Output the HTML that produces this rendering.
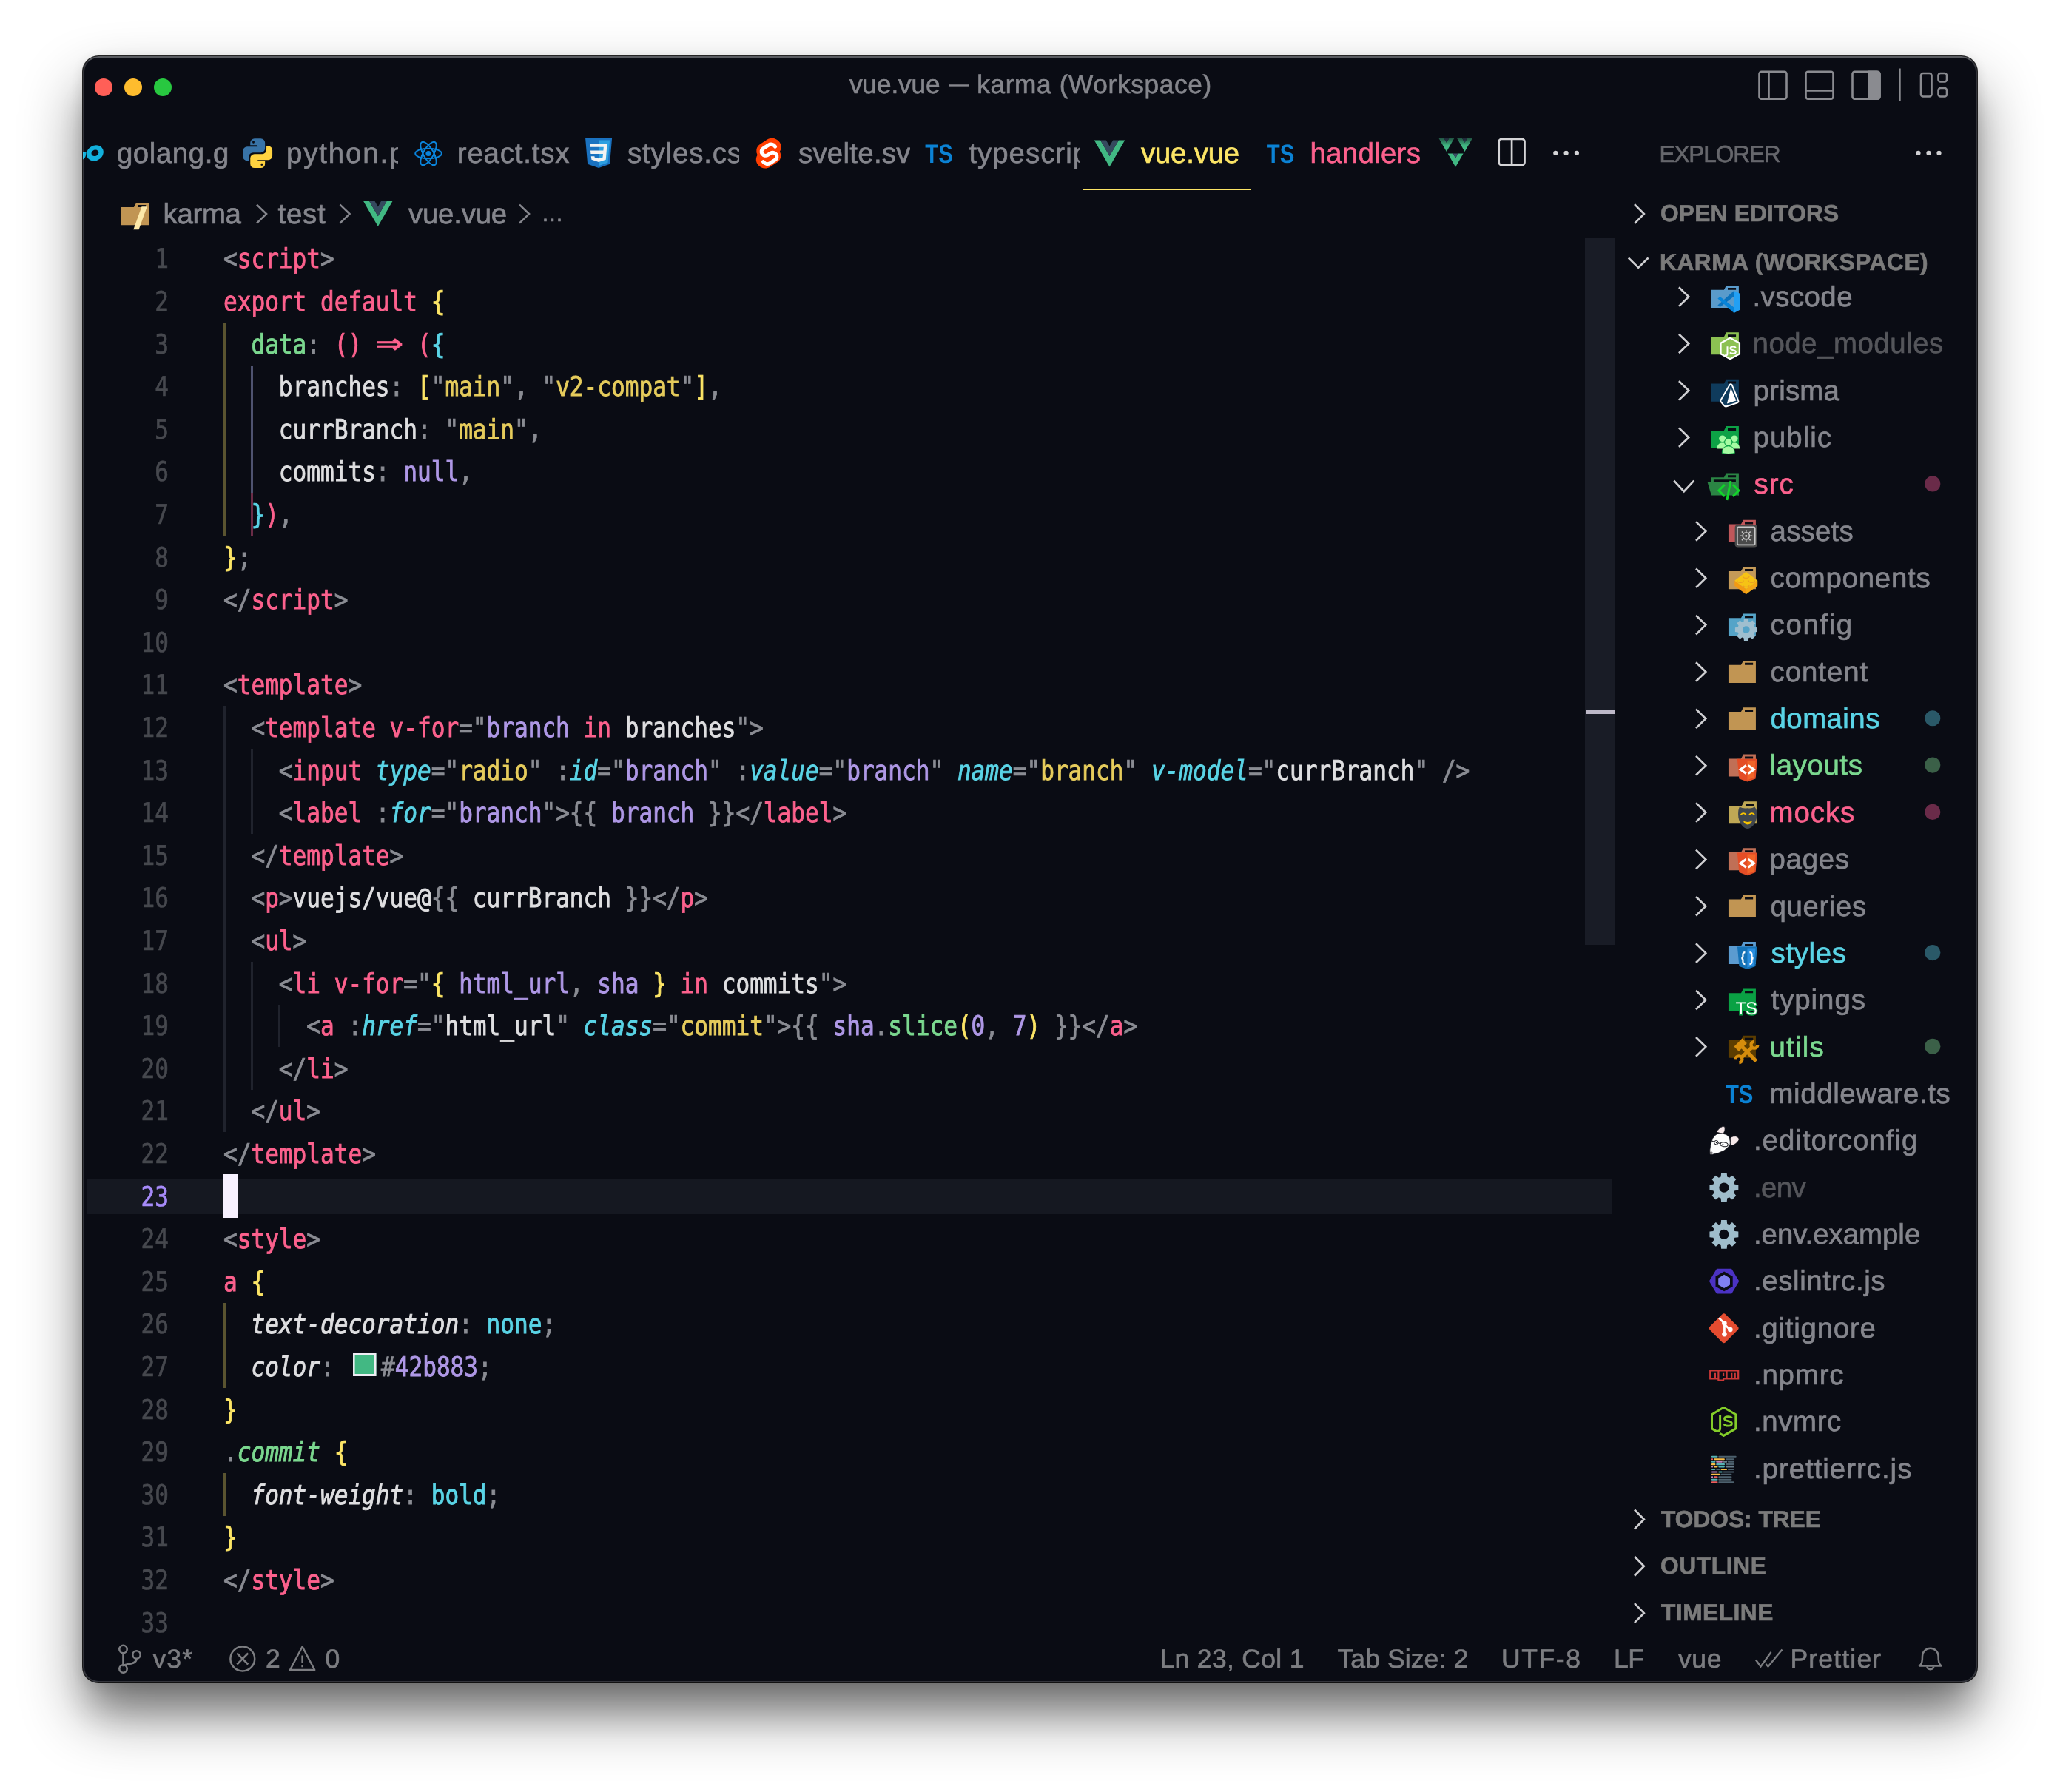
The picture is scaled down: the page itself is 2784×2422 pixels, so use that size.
<!DOCTYPE html><html><head><meta charset="utf-8"><title>vue.vue — karma (Workspace)</title><style>
*{box-sizing:border-box}
html,body{margin:0;padding:0;background:#fff;}
body{width:2784px;height:2422px;position:relative;overflow:hidden;font-family:"Liberation Sans",sans-serif;text-rendering:geometricPrecision;}
#win{position:absolute;left:112px;top:76px;width:2560px;height:2198px;background:#0a0c14;border-radius:21px;
 box-shadow:0 0 0 1px rgba(0,0,0,.85),0 43px 82px rgba(0,0,0,.46),0 4px 20px rgba(0,0,0,.12),0 46px 48px -10px rgba(0,0,0,.22);overflow:hidden;will-change:transform;}
#win:after{content:"";position:absolute;inset:0;border-radius:21px;border:2px solid rgba(255,255,255,.17);border-top-color:rgba(255,255,255,.33);pointer-events:none;}
.a{position:absolute}
.t{position:absolute;white-space:pre;color:#85868d;-webkit-text-stroke:.65px}
.ui{font-size:38.4px;letter-spacing:.45px;line-height:63.36px;height:63.36px}
.mono{font-family:"DejaVu Sans Mono","Liberation Mono",monospace;}
.ln{position:absolute;left:0;width:116px;text-align:right;color:#46484e;font-size:36.6px;line-height:57.599999999999994px;height:57.599999999999994px;white-space:pre}
.ln span{-webkit-text-stroke:.7px;display:inline-block;transform:scaleX(.8497);transform-origin:100% 50%}
.cl{-webkit-text-stroke:.95px;position:absolute;left:190.20000000000002px;font-size:36.6px;line-height:57.599999999999994px;height:57.599999999999994px;white-space:pre;transform:scaleX(.8497);transform-origin:0 50%;color:#dfdfe1}
.p{color:#8a8c93}.k{color:#fc618d}.y{color:#fce566}.s{color:#e6cc5c}.g{color:#7bd88f}.c{color:#5ad4e6}.v{color:#af98e6}.w{color:#dfdfe1}
.i{font-style:italic}
.gd{position:absolute;width:3px}
.hdr{font-weight:bold;font-size:31.68px;letter-spacing:.5px;color:#7b7b7b;line-height:63.36px;height:63.36px}
.st{font-size:35.5px;letter-spacing:.6px;line-height:63.36px;height:63.36px;color:#7c7d81}
svg{position:absolute;overflow:visible}
</style></head><body><div id="win">
<div class="a" style="left:16px;top:29.7px;width:24px;height:24px;border-radius:50%;background:#ff5f57"></div>
<div class="a" style="left:56px;top:29.7px;width:24px;height:24px;border-radius:50%;background:#febc2e"></div>
<div class="a" style="left:96px;top:29.7px;width:24px;height:24px;border-radius:50%;background:#28c840"></div>
<div id="t_title1" class="t title" style="left:1036.0px;top:9.4px;font-size:35.2px;line-height:60px;color:#85868c;letter-spacing:-0.103px">vue.vue</div>
<div id="t_title2" class="t title" style="left:1171.0px;top:7.0px;font-size:26px;line-height:60px;color:#85868c;letter-spacing:0.2px">—</div>
<div id="t_title3" class="t title" style="left:1208.2px;top:9.4px;font-size:35.2px;line-height:60px;color:#85868c;letter-spacing:0.663px">karma (Workspace)</div>
<svg style="left:2258px;top:14px" width="270" height="50" viewBox="2370 90 270 50" fill="none" stroke="#8a8b90" stroke-width="2.6">
<rect x="2377.5" y="96.8" width="37" height="37" rx="3"/><path d="M2390.5 96.8v37"/>
<rect x="2440.5" y="96.8" width="37" height="37" rx="3"/><path d="M2440.5 122.5h37"/>
<rect x="2503.5" y="96.8" width="37" height="37" rx="3"/><path d="M2526.300 96.8h10.200a4 4 0 0 1 4 4v29a4 4 0 0 1-4 4H2526.300z" fill="#8a8b90"/>
<path d="M2567.5 92.5v44.5" stroke-width="2.4"/>
<rect x="2596" y="99" width="14.5" height="31.5" rx="3"/><rect x="2619.5" y="99" width="11.5" height="11.5" rx="3"/><rect x="2619.5" y="119" width="11.5" height="11.5" rx="3"/>
</svg>
<div class="a" style="left:43.5px;top:82.04px;height:100px;width:152.5px;overflow:hidden">
<div id="t_tab0" class="t ui" style="left:2.41px;top:0.0px;line-height:100px;height:100px;letter-spacing:0.585px">golang.go</div>
</div>
<div class="a" style="left:272.7px;top:82.04px;height:100px;width:153.7px;overflow:hidden">
<div id="t_tab1" class="t ui" style="left:2.4px;top:0.0px;line-height:100px;height:100px;letter-spacing:1.85px">python.py</div>
</div>
<div class="a" style="left:503.8px;top:82.04px;height:100px;width:174.2px;overflow:hidden">
<div id="t_tab2" class="t ui" style="left:2.0px;top:0.0px;line-height:100px;height:100px;letter-spacing:0.825px">react.tsx</div>
</div>
<div class="a" style="left:733.5px;top:82.04px;height:100px;width:153.7px;overflow:hidden">
<div id="t_tab3" class="t ui" style="left:2.41px;top:0.0px;line-height:100px;height:100px;letter-spacing:0.862px">styles.css</div>
</div>
<div class="a" style="left:964.5px;top:82.04px;height:100px;width:153.1px;overflow:hidden">
<div id="t_tab4" class="t ui" style="left:2.41px;top:0.0px;line-height:100px;height:100px;letter-spacing:0.281px">svelte.svelte</div>
</div>
<div class="a" style="left:1195px;top:82.04px;height:100px;width:153px;overflow:hidden">
<div id="t_tab5" class="t ui" style="left:2.4px;top:0.0px;line-height:100px;height:100px;letter-spacing:1.0px">typescript.ts</div>
</div>
<div id="t_tabvue" class="t ui" style="left:1430.0px;top:82.04px;line-height:100px;height:100px;color:#fce566;letter-spacing:-0.22px">vue.vue</div>
<div id="t_tabhandlers" class="t ui" style="left:1658.5px;top:82.04px;line-height:100px;height:100px;color:#fc618d;letter-spacing:0.3px">handlers</div>
<div class="a" style="left:1351px;top:179px;width:227px;height:2px;background:#fce566"></div>
<div id="t_bc1" class="t ui" style="left:108.5px;top:181.74px;;letter-spacing:-0.3px">karma</div>
<div id="t_bc2" class="t ui" style="left:263.5px;top:181.74px;;letter-spacing:0.789px">test</div>
<div id="t_bc3" class="t ui" style="left:440.0px;top:181.74px;;letter-spacing:-0.224px">vue.vue</div>
<div class="t ui" style="left:619.5px;top:181.74px;font-size:30px;letter-spacing:-1.2px">…</div>
<div class="a" style="left:5px;top:1517.0px;width:2060.5px;height:47.99999999999999px;background:#151821"></div>
<div class="a" style="left:2030.2px;top:244.8px;width:40.20000000000027px;height:956.2px;background:#191c26"></div>
<div class="a" style="left:2031.2px;top:883.7px;width:39.20000000000027px;height:5.4px;background:#bdb8c8"></div>
<div class="a mono" style="left:0;top:244.8px;width:2070.4px;height:1889.84px;overflow:hidden">
<div class="ln" style="top:0.6px"><span>1</span></div>
<div class="cl" style="top:0.6px"><span class="p">&lt;</span><span class="k">script</span><span class="p">&gt;</span></div>
<div class="ln" style="top:58.2px"><span>2</span></div>
<div class="cl" style="top:58.2px"><span class="k">export default </span><span class="y">{</span></div>
<div class="ln" style="top:115.8px"><span>3</span></div>
<div class="cl" style="top:115.8px">  <span class="g">data</span><span class="p">: </span><span class="k">() </span><span class="k" style="display:inline-block;width:2ch;text-align:center"><span style="display:inline-block;transform:translateY(-3px) scale(1.95,1.25)">⇒</span></span><span class="k"> (</span><span class="c">{</span></div>
<div class="ln" style="top:173.4px"><span>4</span></div>
<div class="cl" style="top:173.4px">    <span class="w">branches</span><span class="p">: </span><span class="y">[</span><span class="p">"</span><span class="s">main</span><span class="p">"</span><span class="p">, </span><span class="p">"</span><span class="s">v2-compat</span><span class="p">"</span><span class="y">]</span><span class="p">,</span></div>
<div class="ln" style="top:231.0px"><span>5</span></div>
<div class="cl" style="top:231.0px">    <span class="w">currBranch</span><span class="p">: </span><span class="p">"</span><span class="s">main</span><span class="p">"</span><span class="p">,</span></div>
<div class="ln" style="top:288.6px"><span>6</span></div>
<div class="cl" style="top:288.6px">    <span class="w">commits</span><span class="p">: </span><span class="v">null</span><span class="p">,</span></div>
<div class="ln" style="top:346.2px"><span>7</span></div>
<div class="cl" style="top:346.2px">  <span class="c">}</span><span class="k">)</span><span class="p">,</span></div>
<div class="ln" style="top:403.8px"><span>8</span></div>
<div class="cl" style="top:403.8px"><span class="y">}</span><span class="p">;</span></div>
<div class="ln" style="top:461.4px"><span>9</span></div>
<div class="cl" style="top:461.4px"><span class="p">&lt;/</span><span class="k">script</span><span class="p">&gt;</span></div>
<div class="ln" style="top:519.0px"><span>10</span></div>
<div class="ln" style="top:576.6px"><span>11</span></div>
<div class="cl" style="top:576.6px"><span class="p">&lt;</span><span class="k">template</span><span class="p">&gt;</span></div>
<div class="ln" style="top:634.2px"><span>12</span></div>
<div class="cl" style="top:634.2px">  <span class="p">&lt;</span><span class="k">template v-for</span><span class="p">=</span><span class="p">"</span><span class="v">branch</span><span class="k"> in </span><span class="w">branches</span><span class="p">"</span><span class="p">&gt;</span></div>
<div class="ln" style="top:691.8px"><span>13</span></div>
<div class="cl" style="top:691.8px">    <span class="p">&lt;</span><span class="k">input </span><span class="c i">type</span><span class="p">=</span><span class="p">"</span><span class="s">radio</span><span class="p">"</span><span class="p"> :</span><span class="c i">id</span><span class="p">=</span><span class="p">"</span><span class="v">branch</span><span class="p">"</span><span class="p"> :</span><span class="c i">value</span><span class="p">=</span><span class="p">"</span><span class="v">branch</span><span class="p">"</span> <span class="c i">name</span><span class="p">=</span><span class="p">"</span><span class="s">branch</span><span class="p">"</span> <span class="c i">v-model</span><span class="p">=</span><span class="p">"</span><span class="w">currBranch</span><span class="p">"</span><span class="p"> /&gt;</span></div>
<div class="ln" style="top:749.4px"><span>14</span></div>
<div class="cl" style="top:749.4px">    <span class="p">&lt;</span><span class="k">label </span><span class="p">:</span><span class="c i">for</span><span class="p">=</span><span class="p">"</span><span class="v">branch</span><span class="p">"</span><span class="p">&gt;{{ </span><span class="v">branch</span><span class="p"> }}&lt;/</span><span class="k">label</span><span class="p">&gt;</span></div>
<div class="ln" style="top:807.0px"><span>15</span></div>
<div class="cl" style="top:807.0px">  <span class="p">&lt;/</span><span class="k">template</span><span class="p">&gt;</span></div>
<div class="ln" style="top:864.6px"><span>16</span></div>
<div class="cl" style="top:864.6px">  <span class="p">&lt;</span><span class="k">p</span><span class="p">&gt;</span><span class="w">vuejs/vue@</span><span class="p">{{ </span><span class="w">currBranch</span><span class="p"> }}&lt;/</span><span class="k">p</span><span class="p">&gt;</span></div>
<div class="ln" style="top:922.2px"><span>17</span></div>
<div class="cl" style="top:922.2px">  <span class="p">&lt;</span><span class="k">ul</span><span class="p">&gt;</span></div>
<div class="ln" style="top:979.8px"><span>18</span></div>
<div class="cl" style="top:979.8px">    <span class="p">&lt;</span><span class="k">li v-for</span><span class="p">=</span><span class="p">"</span><span class="y">{ </span><span class="v">html_url</span><span class="p">, </span><span class="v">sha</span><span class="y"> }</span><span class="k"> in </span><span class="w">commits</span><span class="p">"&gt;</span></div>
<div class="ln" style="top:1037.4px"><span>19</span></div>
<div class="cl" style="top:1037.4px">      <span class="p">&lt;</span><span class="k">a </span><span class="p">:</span><span class="c i">href</span><span class="p">=</span><span class="p">"</span><span class="w">html_url</span><span class="p">"</span> <span class="c i">class</span><span class="p">=</span><span class="p">"</span><span class="s">commit</span><span class="p">"</span><span class="p">&gt;{{ </span><span class="v">sha</span><span class="p">.</span><span class="g">slice</span><span class="y">(</span><span class="v">0</span><span class="p">, </span><span class="v">7</span><span class="y">)</span><span class="p"> }}&lt;/</span><span class="k">a</span><span class="p">&gt;</span></div>
<div class="ln" style="top:1095.0px"><span>20</span></div>
<div class="cl" style="top:1095.0px">    <span class="p">&lt;/</span><span class="k">li</span><span class="p">&gt;</span></div>
<div class="ln" style="top:1152.6px"><span>21</span></div>
<div class="cl" style="top:1152.6px">  <span class="p">&lt;/</span><span class="k">ul</span><span class="p">&gt;</span></div>
<div class="ln" style="top:1210.2px"><span>22</span></div>
<div class="cl" style="top:1210.2px"><span class="p">&lt;/</span><span class="k">template</span><span class="p">&gt;</span></div>
<div class="ln" style="top:1267.8px;color:#a78bfa"><span>23</span></div>
<div class="ln" style="top:1325.4px"><span>24</span></div>
<div class="cl" style="top:1325.4px"><span class="p">&lt;</span><span class="k">style</span><span class="p">&gt;</span></div>
<div class="ln" style="top:1383.0px"><span>25</span></div>
<div class="cl" style="top:1383.0px"><span class="k">a </span><span class="y">{</span></div>
<div class="ln" style="top:1440.6px"><span>26</span></div>
<div class="cl" style="top:1440.6px">  <span class="w i">text-decoration</span><span class="p">: </span><span class="c">none</span><span class="p">;</span></div>
<div class="ln" style="top:1498.2px"><span>27</span></div>
<div class="cl" style="top:1498.2px">  <span class="w i">color</span><span class="p">: </span><span style="display:inline-block;width:52.5px;height:57.6px;position:relative;vertical-align:top"><span style="position:absolute;left:7.3px;top:9.8px;width:37px;height:31.4px;background:#42b883;border:solid #efedf4;border-width:3.2px 3.8px"></span></span><span class="p">#</span><span class="v">42b883</span><span class="p">;</span></div>
<div class="ln" style="top:1555.8px"><span>28</span></div>
<div class="cl" style="top:1555.8px"><span class="y">}</span></div>
<div class="ln" style="top:1613.4px"><span>29</span></div>
<div class="cl" style="top:1613.4px"><span class="p">.</span><span class="g i">commit</span><span class="y"> {</span></div>
<div class="ln" style="top:1671.0px"><span>30</span></div>
<div class="cl" style="top:1671.0px">  <span class="w i">font-weight</span><span class="p">: </span><span class="c">bold</span><span class="p">;</span></div>
<div class="ln" style="top:1728.6px"><span>31</span></div>
<div class="cl" style="top:1728.6px"><span class="y">}</span></div>
<div class="ln" style="top:1786.2px"><span>32</span></div>
<div class="cl" style="top:1786.2px"><span class="p">&lt;/</span><span class="k">style</span><span class="p">&gt;</span></div>
<div class="ln" style="top:1843.8px"><span>33</span></div>
<div class="gd" style="left:189.6px;top:115.2px;height:288.0px;background:#5a5430"></div>
<div class="gd" style="left:227.04px;top:172.8px;height:172.8px;background:#4f5370"></div>
<div class="gd" style="left:227.04px;top:345.6px;height:57.6px;background:#6a2c47"></div>
<div class="gd" style="left:189.6px;top:633.6px;height:576.0px;background:#20232d"></div>
<div class="gd" style="left:227.04px;top:691.2px;height:115.2px;background:#20232d"></div>
<div class="gd" style="left:227.04px;top:979.2px;height:172.8px;background:#20232d"></div>
<div class="gd" style="left:264.48px;top:1036.8px;height:57.6px;background:#20232d"></div>
<div class="gd" style="left:189.6px;top:1440.0px;height:115.2px;background:#5a5430"></div>
<div class="gd" style="left:189.6px;top:1670.4px;height:57.6px;background:#5a5430"></div>
<div class="a" style="left:190px;top:1266.4px;width:19.2px;height:58.4px;background:#f7f1ff"></div>
</div>
<div id="t_s1" class="t st" style="left:94.5px;top:2134.64px;;letter-spacing:1.1px">v3*</div>
<div id="t_s2" class="t st" style="left:247.0px;top:2134.64px;;letter-spacing:0.6px">2</div>
<div id="t_s3" class="t st" style="left:327.5px;top:2134.64px;;letter-spacing:0.6px">0</div>
<div id="t_s4" class="t st" style="left:1455.5px;top:2134.64px;;letter-spacing:0.324px">Ln 23, Col 1</div>
<div id="t_s5" class="t st" style="left:1695.5px;top:2134.64px;;letter-spacing:0.1px">Tab Size: 2</div>
<div id="t_s6" class="t st" style="left:1917.0px;top:2134.64px;;letter-spacing:1.6px">UTF-8</div>
<div id="t_s7" class="t st" style="left:2069.0px;top:2134.64px;;letter-spacing:-0.4px">LF</div>
<div id="t_s8" class="t st" style="left:2156.0px;top:2134.64px;;letter-spacing:0.6px">vue</div>
<div id="t_s9" class="t st" style="left:2307.5px;top:2134.64px;;letter-spacing:1.177px">Prettier</div>
<div id="t_explorer" class="t " style="left:2130.5px;top:100.96px;font-size:31.6px;color:#66676c;line-height:63.36px;letter-spacing:-1.143px">EXPLORER</div>
<div id="t_h_OPEN" class="t hdr" style="left:2132.0px;top:181.24px;;letter-spacing:0.224px">OPEN EDITORS</div>
<div id="t_h_KARMA" class="t hdr" style="left:2131.0px;top:246.9px;;letter-spacing:0.561px">KARMA (WORKSPACE)</div>
<div id="t_h_TODOS" class="t hdr" style="left:2133.0px;top:1945.76px;;letter-spacing:0.0px">TODOS: TREE</div>
<div id="t_h_OUTLINE" class="t hdr" style="left:2132.0px;top:2009.12px;;letter-spacing:0.666px">OUTLINE</div>
<div id="t_h_TIMELINE" class="t hdr" style="left:2133.0px;top:2072.48px;;letter-spacing:0.506px">TIMELINE</div>
<div id="t_r0" class="t ui" style="left:2256.5px;top:293.82px;color:#85868d;letter-spacing:0.447px">.vscode</div>
<div id="t_r1" class="t ui" style="left:2256.5px;top:357.18px;color:#55565b;letter-spacing:0.54px">node_modules</div>
<div id="t_r2" class="t ui" style="left:2257.5px;top:420.54px;color:#85868d;letter-spacing:0.25px">prisma</div>
<div id="t_r3" class="t ui" style="left:2257.5px;top:483.9px;color:#85868d;letter-spacing:1.05px">public</div>
<div id="t_r4" class="t ui" style="left:2258.5px;top:547.26px;color:#fc618d;letter-spacing:0.95px">src</div>
<div id="t_r5" class="t ui" style="left:2280.54px;top:610.62px;color:#85868d;letter-spacing:0.25px">assets</div>
<div id="t_r6" class="t ui" style="left:2280.54px;top:673.98px;color:#85868d;letter-spacing:0.775px">components</div>
<div id="t_r7" class="t ui" style="left:2280.54px;top:737.34px;color:#85868d;letter-spacing:1.65px">config</div>
<div id="t_r8" class="t ui" style="left:2280.54px;top:800.7px;color:#85868d;letter-spacing:0.947px">content</div>
<div id="t_r9" class="t ui" style="left:2280.54px;top:864.06px;color:#5ad4e6;letter-spacing:0.448px">domains</div>
<div id="t_r10" class="t ui" style="left:2279.54px;top:927.42px;color:#7bd88f;letter-spacing:0.613px">layouts</div>
<div id="t_r11" class="t ui" style="left:2279.54px;top:990.78px;color:#fc618d;letter-spacing:0.95px">mocks</div>
<div id="t_r12" class="t ui" style="left:2279.54px;top:1054.14px;color:#85868d;letter-spacing:0.7px">pages</div>
<div id="t_r13" class="t ui" style="left:2280.54px;top:1117.5px;color:#85868d;letter-spacing:0.611px">queries</div>
<div id="t_r14" class="t ui" style="left:2281.54px;top:1180.86px;color:#5ad4e6;letter-spacing:0.65px">styles</div>
<div id="t_r15" class="t ui" style="left:2281.54px;top:1244.22px;color:#85868d;letter-spacing:0.953px">typings</div>
<div id="t_r16" class="t ui" style="left:2279.54px;top:1307.58px;color:#7bd88f;letter-spacing:1.2px">utils</div>
<div id="t_r17" class="t ui" style="left:2279.54px;top:1370.94px;color:#85868d;letter-spacing:0.609px">middleware.ts</div>
<div id="t_r18" class="t ui" style="left:2257.9px;top:1434.3px;color:#85868d;letter-spacing:1.032px">.editorconfig</div>
<div id="t_r19" class="t ui" style="left:2257.9px;top:1497.66px;color:#55565b;letter-spacing:-0.555px">.env</div>
<div id="t_r20" class="t ui" style="left:2257.9px;top:1561.02px;color:#85868d;letter-spacing:-0.013px">.env.example</div>
<div id="t_r21" class="t ui" style="left:2257.9px;top:1624.38px;color:#85868d;letter-spacing:0.637px">.eslintrc.js</div>
<div id="t_r22" class="t ui" style="left:2257.9px;top:1687.74px;color:#85868d;letter-spacing:0.786px">.gitignore</div>
<div id="t_r23" class="t ui" style="left:2257.9px;top:1751.1px;color:#85868d;letter-spacing:0.85px">.npmrc</div>
<div id="t_r24" class="t ui" style="left:2257.9px;top:1814.46px;color:#85868d;letter-spacing:0.65px">.nvmrc</div>
<div id="t_r25" class="t ui" style="left:2257.9px;top:1877.82px;color:#85868d;letter-spacing:0.994px">.prettierrc.js</div>
<svg style="left:0;top:0" width="2560" height="2198" viewBox="112 76 2560 2198"><g fill="none" stroke="#12b0dc"><ellipse cx="128.400" cy="206.800" rx="8.100" ry="7.400" stroke-width="6.400" transform="skewX(-8)" transform-origin="128.400 206.800"/><path d="M110.500 201.800A8.500 7.400 0 1 0 113.500 208.300H104" stroke-width="5.600"/></g><g transform="translate(324.32 183.32) scale(1.99)" ><path fill="#3873a7" d="M9.86 2A2.86 2.86 0 0 0 7 4.86v1.68h4.29c.39 0 .71.57.71.96H4.86A2.86 2.86 0 0 0 2 10.36v3.78a2.86 2.86 0 0 0 2.86 2.86h1.18v-2.68a2.85 2.85 0 0 1 2.85-2.86h5.25a2.85 2.85 0 0 0 2.86-2.85V4.86A2.86 2.86 0 0 0 14.14 2zm-.72 1.61c.4 0 .72.12.72.71s-.32.89-.72.89c-.39 0-.71-.3-.71-.89s.32-.71.71-.71z"/><path fill="#ffd340" d="M17.96 7v2.68a2.85 2.85 0 0 1-2.85 2.86H9.86A2.85 2.85 0 0 0 7 15.39v3.75A2.86 2.86 0 0 0 9.86 22h4.28A2.86 2.86 0 0 0 17 19.14v-1.68h-4.29c-.39 0-.71-.57-.71-.96h7.14A2.86 2.86 0 0 0 22 13.64V9.86A2.86 2.86 0 0 0 19.14 7zm-3.1 11.79c.39 0 .71.3.71.89a.71.71 0 0 1-.71.71c-.4 0-.72-.12-.72-.71s.32-.89.72-.89z"/></g><g transform="translate(558.5 187) scale(1.7083)" ><g fill="none" stroke="#0a84dc" stroke-width="1.15"><ellipse cx="12" cy="12" rx="10.4" ry="4"/><ellipse cx="12" cy="12" rx="10.4" ry="4" transform="rotate(60 12 12)"/><ellipse cx="12" cy="12" rx="10.4" ry="4" transform="rotate(120 12 12)"/></g><circle cx="12" cy="12" r="2.1" fill="#0a84dc"/></g><g transform="translate(791.1 186.7) scale(1)" ><path fill="#1a72c0" d="M0 0H36L33 35 18 40.400 3 35z"/><path fill="#2d9fe0" d="M18 2.800V37.500L30.400 33.100 33 2.800z"/><path fill="#f2f2f2" d="M6.500 7.300H29.500L27.700 29 18 32.200 8.300 29 7.700 24.500H12.300L12.600 26 18 27.600 23.400 26 23.900 21.400H7.300L6.900 16.800H24.300L24.700 12H6.900z"/></g><g transform="translate(1015 182.9) scale(1.995)" ><path fill="#ff3e00" d="M19.3 4.6C17.4 1.9 13.7 1.1 11 2.8L6.2 5.9a5.5 5.5 0 0 0-2.5 3.7 5.8 5.8 0 0 0 .6 3.7 5.5 5.5 0 0 0-.8 2 5.9 5.9 0 0 0 1 4.4c1.900 2.7 5.600 3.500 8.300 1.800l4.800-3.100a5.500 5.500 0 0 0 2.500-3.700 5.800 5.800 0 0 0-.6-3.700 5.500 5.500 0 0 0 .8-2 5.900 5.900 0 0 0-1-4.400"/><path fill="none" stroke="#fff" stroke-width="2.5" stroke-linecap="round" stroke-linejoin="round" d="M16.3 7.6c-1-1.500-3-1.900-4.500-1L8.300 8.900c-1.300.8-1.600 2.500-.7 3.700.9 1.200 2.500 1.500 3.800.700l1.800-1.100c1.300-.8 2.900-.5 3.800.700.9 1.200.6 2.900-.7 3.700L12.800 18.900c-1.500.9-3.500.5-4.500-1"/></g><text x="1250.3" y="220" font-family="Liberation Sans, sans-serif" font-weight="bold" font-size="35.5" fill="#0b82d4" textLength="37.5" lengthAdjust="spacingAndGlyphs">TS</text><g transform="translate(1478.8 189.5) scale(1.725)" ><path fill="#41b883" d="M0 0h4.800L12 12.400 19.200 0H24L12 20.800z"/><path fill="#35495e" d="M4.800 0h4.500L12 4.700 14.700 0h4.500L12 12.400z"/></g><text x="1711.8" y="220" font-family="Liberation Sans, sans-serif" font-weight="bold" font-size="35.5" fill="#0b82d4" textLength="37.5" lengthAdjust="spacingAndGlyphs">TS</text><defs><linearGradient id="fd" x1="0" y1="0" x2="0" y2="1"><stop offset="0" stop-color="#0a0c14" stop-opacity=".75"/><stop offset=".5" stop-color="#0a0c14" stop-opacity="0"/></linearGradient></defs><g transform="translate(1944.4 186.7) scale(0.875)" ><path fill="#41b883" d="M0 0h8L12 7 16 0h8L12 21z"/><path fill="#3a5068" d="M8 0h8l-4 7z"/></g><g transform="translate(1969 186.7) scale(0.875)" ><path fill="#41b883" d="M0 0h8L12 7 16 0h8L12 21z"/><path fill="#3a5068" d="M8 0h8l-4 7z"/></g><g transform="translate(1956.6 207.4) scale(0.875)" ><path fill="#41b883" d="M0 0h8L12 7 16 0h8L12 21z"/><path fill="#3a5068" d="M8 0h8l-4 7z"/></g><rect x="1940" y="184" width="54" height="26" fill="url(#fd)"/><g fill="none" stroke="#d4d4d6" stroke-width="2.7"><rect x="2025.7" y="188" width="34.8" height="35" rx="3.5"/><path d="M2043.1 188v35"/></g><circle cx="2102.3" cy="206.9" r="3.1" fill="#d4d4d6"/><circle cx="2116.6" cy="206.9" r="3.1" fill="#d4d4d6"/><circle cx="2130.9" cy="206.9" r="3.1" fill="#d4d4d6"/><path transform="translate(164 274.2)" fill="#c19553" fill-rule="evenodd" d="M0 5.8H17L20.1 0H37V30H0Z M22.1 2.9H33.2V5.8H22.1Z"/><path d="M191.500 279.300h7.300l-11.200 31h-7.300z" fill="#fde9a9"/><path d="M347 276.62l13 12.5l-13 12.5" fill="none" stroke="#85868d" stroke-width="2.6"/><path d="M459.5 276.62l13 12.5l-13 12.5" fill="none" stroke="#85868d" stroke-width="2.6"/><g transform="translate(490.9 271.6) scale(1.6583)" ><path fill="#41b883" d="M0 0h4.800L12 12.400 19.200 0H24L12 20.800z"/><path fill="#35495e" d="M4.800 0h4.500L12 4.700 14.700 0h4.500L12 12.400z"/></g><path d="M702 276.62l13 12.5l-13 12.5" fill="none" stroke="#85868d" stroke-width="2.6"/><g fill="none" stroke="#7c7d81" stroke-width="2.6"><circle cx="166.5" cy="2229" r="5.2"/><circle cx="166.5" cy="2255.5" r="5.2"/><circle cx="184.5" cy="2236.500" r="5.2"/><path d="M166.5 2234.2v16.1M184.5 2241.700c0 6-7 7-12 7.600-3 .4-6 1-6 3"/></g><g fill="none" stroke="#7c7d81" stroke-width="2.5"><circle cx="327.8" cy="2242" r="16.4"/><path d="M320.300 2234.500l15 15M335.300 2234.500l-15 15"/></g><g fill="none" stroke="#7c7d81" stroke-width="2.5" stroke-linejoin="round"><path d="M408.600 2225.500l16.600 31.500h-33.200z"/><path d="M408.600 2237.500v9.500M408.600 2250v3.200"/></g><path d="M2373 2243.500l6.500 9 14-19.500M2386.500 2249l3 3.500 19-23" fill="none" stroke="#7c7d81" stroke-width="2.4"/><g fill="none" stroke="#7c7d81" stroke-width="2.5" stroke-linejoin="round"><path d="M2594 2251.500c3.500-3 4-6 4-13a10.800 10.800 0 0 1 21.600 0c0 7 .5 10 4 13z"/><path d="M2604.300 2252.500a4.600 4.600 0 0 0 9 0"/></g><circle cx="2592.5" cy="206.9" r="3.1" fill="#cfcfd2"/><circle cx="2606.5" cy="206.9" r="3.1" fill="#cfcfd2"/><circle cx="2620.5" cy="206.9" r="3.1" fill="#cfcfd2"/><path d="M2209 276.12l12.8 13.0l-12.8 13.0" fill="none" stroke="#cfcfd2" stroke-width="2.7"/><path d="M2200.8 348.48l13.4 13.2l13.4 -13.2" fill="none" stroke="#cfcfd2" stroke-width="2.7"/><path d="M2209 2040.4399999999996l12.8 13.0l-12.8 13.0" fill="none" stroke="#cfcfd2" stroke-width="2.7"/><path d="M2209 2103.7999999999997l12.8 13.0l-12.8 13.0" fill="none" stroke="#cfcfd2" stroke-width="2.7"/><path d="M2209 2167.16l12.8 13.0l-12.8 13.0" fill="none" stroke="#cfcfd2" stroke-width="2.7"/><clipPath id="tc"><rect x="2182.4" y="384.6" width="489.59999999999997" height="1635.96"/></clipPath><g clip-path="url(#tc)"><path d="M2269.0 388.3l13.2 12.8l-13.2 12.8" fill="none" stroke="#cfcfd2" stroke-width="2.7"/><path transform="translate(2312.9 386.0)" fill="#5a9bcb" fill-rule="evenodd" d="M0 5.8H17L20.1 0H37V30H0Z M22.1 2.9H33.2V5.8H22.1Z"/><g transform="translate(2321.4 392.5)"><path d="M22 0.500L30.500 4.500V26L22 30.500z" fill="#22a0f4"/><path d="M22 0.500v7.500L3.200 22.500 0 20z" fill="#0a72bd"/><path d="M22 30.500v-7.500L3.200 8.500 0 11z" fill="#0784d9"/></g><path d="M2269.0 451.66l13.2 12.8l-13.2 12.8" fill="none" stroke="#cfcfd2" stroke-width="2.7"/><path transform="translate(2312.9 449.36)" fill="#8cc152" fill-rule="evenodd" d="M0 5.8H17L20.1 0H37V30H0Z M22.1 2.9H33.2V5.8H22.1Z"/><g transform="translate(2324.9 456.86)"><path d="M13.300 0L26 7v14.500L13.300 28.500.6 21.500V7z" fill="#8cc152" stroke="#fff" stroke-width="2.3" stroke-linejoin="round"/><path d="M9.600 11.500v10c0 2-1.600 3-3.600 1.500" fill="none" stroke="#fff" stroke-width="2"/><path d="M21 13c-1.500-2-7.500-2-7.500 1s7.500 1.600 7.500 4.600-6.500 3-8 .9" fill="none" stroke="#fff" stroke-width="2"/></g><path d="M2269.0 515.0200000000001l13.2 12.8l-13.2 12.8" fill="none" stroke="#cfcfd2" stroke-width="2.7"/><path transform="translate(2312.9 512.72)" fill="#0f3b5c" fill-rule="evenodd" d="M0 5.8H17L20.1 0H37V30H0Z M22.1 2.9H33.2V5.8H22.1Z"/><g transform="translate(2324.4 518.52) scale(1.26)"><path d="M10.500 1.200L1 17.500c-.5.9-.4 1.500.2 2.200l3.600 4.100c.7.700 1.400.9 2.300.6l11.700-3.900c1-.4 1.300-1.300.9-2.200L12.900 1.300c-.5-1-1.800-1.100-2.400-.1z" fill="#0f3b5c" stroke="#fff" stroke-width="1.500"/><path d="M11.700 4.500L17.500 18.300 7.600 21.500z" fill="#fff"/></g><path d="M2269.0 578.38l13.2 12.8l-13.2 12.8" fill="none" stroke="#cfcfd2" stroke-width="2.7"/><path transform="translate(2312.9 576.08)" fill="#0da246" fill-rule="evenodd" d="M0 5.8H17L20.1 0H37V30H0Z M22.1 2.9H33.2V5.8H22.1Z"/><g transform="translate(2320.5 586.0799999999999) scale(1.04 .95)" fill="#a5fba3"><circle cx="7" cy="7" r="4.500"/><circle cx="22.500" cy="7" r="4.500"/><path d="M0 21.500c0-6 3-8.500 7-8.500s5 1.500 6 3l-3.500 5.500z"/><path d="M29.500 21.500c0-6-3-8.500-7-8.500s-5 1.500-6 3l3.500 5.500z"/><circle cx="14.700" cy="12" r="5" stroke="#0da246" stroke-width="1"/><path d="M6.500 27.500c0-7 3.500-9.800 8.200-9.800s8.200 2.800 8.200 9.800c-3 1.700-13.400 1.700-16.400 0z" stroke="#0da246" stroke-width="1"/></g><path d="M2262.3 649.69l13.5 14.5l13.5 -14.5" fill="none" stroke="#cfcfd2" stroke-width="2.7"/><g transform="translate(2312.9 639.44)" fill="#2b8544"><path fill-rule="evenodd" d="M0 5.800H17L20.100 0H37V12h-4V8.700H3V12H0z M22.100 2.900H33.200V5.800H22.100Z"/><path d="M-5.200 12.500H33.500L37 30H0z"/><path d="M33 12h4v18h-1z"/></g><g transform="translate(2321.4 649.94)" fill="none" stroke="#12d42a" stroke-width="3"><path d="M9.500 5L1.500 13l8 8M20.500 5l8 8-8 8M17.500 0l-5 26"/></g><circle cx="2611.800" cy="653.94" r="10.600" fill="#6a2b49"/><path d="M2292.04 705.1l13.2 12.8l-13.2 12.8" fill="none" stroke="#cfcfd2" stroke-width="2.7"/><path transform="translate(2335.94 702.8)" fill="#c0575a" fill-rule="evenodd" d="M0 5.8H17L20.1 0H37V30H0Z M22.1 2.9H33.2V5.8H22.1Z"/><g transform="translate(2344.64 709.1999999999999)"><rect x="0" y="0" width="30.300" height="30.300" rx="4" fill="#4a4a4a"/><rect x="3.200" y="3.200" width="23.900" height="23.900" rx="1.800" fill="none" stroke="#c9c9c9" stroke-width="1.700"/><circle cx="15.150" cy="15.150" r="4.600" fill="none" stroke="#c9c9c9" stroke-width="1.700"/><circle cx="15.150" cy="15.150" r="1.600" fill="#c9c9c9"/><path d="M15.150 6.800v3.200M15.150 20.300v3.200M6.800 15.150h3.200M20.300 15.150h3.200M9.250 9.250l2.300 2.300M18.750 18.750l2.300 2.300M9.250 21.050l2.300-2.300M18.750 11.550l2.300-2.300" stroke="#c9c9c9" stroke-width="1.500"/></g><path d="M2292.04 768.46l13.2 12.8l-13.2 12.8" fill="none" stroke="#cfcfd2" stroke-width="2.7"/><path transform="translate(2335.94 766.16)" fill="#c49a58" fill-rule="evenodd" d="M0 5.8H17L20.1 0H37V30H0Z M22.1 2.9H33.2V5.8H22.1Z"/><g transform="translate(2344.2400000000002 772.86)"><path d="M0 12L15.500 23.500v6.800L0 18.800z" fill="#f39a13"/><path d="M31 12L15.500 23.500v6.800L31 18.800z" fill="#f5a915"/><path d="M15.500 0L31 12 15.500 23.500 0 12z" fill="#f6c315"/><g fill="#f6c315" stroke="#ea9f24" stroke-width="1.100"><path d="M11.200 5.600a4.300 2.900 0 0 0 8.600 0"/><path d="M3.400 11.600a4.300 2.900 0 0 0 8.600 0"/><path d="M19 11.600a4.300 2.900 0 0 0 8.600 0"/><path d="M11.200 17.600a4.300 2.900 0 0 0 8.600 0"/></g></g><path d="M2292.04 831.82l13.2 12.8l-13.2 12.8" fill="none" stroke="#cfcfd2" stroke-width="2.7"/><path transform="translate(2335.94 829.52)" fill="#55a4c8" fill-rule="evenodd" d="M0 5.8H17L20.1 0H37V30H0Z M22.1 2.9H33.2V5.8H22.1Z"/><g transform="translate(2359.84 851.12)"><circle r="8" fill="#55a4c8"/><path d="M-3.32 -11.22L-2.90 -14.92L2.90 -14.92L3.32 -11.22L5.58 -10.28L8.50 -12.60L12.60 -8.50L10.28 -5.58L11.22 -3.32L14.92 -2.90L14.92 2.90L11.22 3.32L10.28 5.58L12.60 8.50L8.50 12.60L5.58 10.28L3.32 11.22L2.90 14.92L-2.90 14.92L-3.32 11.22L-5.58 10.28L-8.50 12.60L-12.60 8.50L-10.28 5.58L-11.22 3.32L-14.92 2.90L-14.92 -2.90L-11.22 -3.32L-10.28 -5.58L-12.60 -8.50L-8.50 -12.60L-5.58 -10.28ZM4.9 0A4.9 4.9 0 1 0 -4.9 0A4.9 4.9 0 1 0 4.9 0Z" fill="#9fbfcf" fill-rule="evenodd"/></g><path d="M2292.04 895.1800000000001l13.2 12.8l-13.2 12.8" fill="none" stroke="#cfcfd2" stroke-width="2.7"/><path transform="translate(2335.94 892.88)" fill="#c19553" fill-rule="evenodd" d="M0 5.8H17L20.1 0H37V30H0Z M22.1 2.9H33.2V5.8H22.1Z"/><path d="M2292.04 958.5400000000001l13.2 12.8l-13.2 12.8" fill="none" stroke="#cfcfd2" stroke-width="2.7"/><path transform="translate(2335.94 956.24)" fill="#c19553" fill-rule="evenodd" d="M0 5.8H17L20.1 0H37V30H0Z M22.1 2.9H33.2V5.8H22.1Z"/><circle cx="2611.800" cy="970.74" r="10.600" fill="#2a5968"/><path d="M2292.04 1021.8999999999999l13.2 12.8l-13.2 12.8" fill="none" stroke="#cfcfd2" stroke-width="2.7"/><path transform="translate(2335.94 1019.6)" fill="#c06f56" fill-rule="evenodd" d="M0 5.8H17L20.1 0H37V30H0Z M22.1 2.9H33.2V5.8H22.1Z"/><g transform="translate(2347.84 1025.6999999999998)"><path d="M0 0h27.200l-2.500 26.700L13.600 30.800 2.500 26.700z" fill="#e44d26"/><path d="M13.600 2.200v26.300l9-3.400L24.800 2.200z" fill="#f16529"/><path d="M12 8.800L4.300 14.300 12 19.800M14.800 8.800L22.500 14.300 14.800 19.800" fill="none" stroke="#fff" stroke-width="3.200"/></g><circle cx="2611.800" cy="1034.1" r="10.600" fill="#3b6048"/><path d="M2292.04 1085.26l13.2 12.8l-13.2 12.8" fill="none" stroke="#cfcfd2" stroke-width="2.7"/><path transform="translate(2336.94 1083.16)" fill="#bfa855" fill-rule="evenodd" d="M0 5.8H17L20.1 0H37V30H0Z M22.1 2.9H33.2V5.8H22.1Z"/><g transform="translate(2349.04 1089.96)"><path d="M1.900 .5Q7 3.500 12.600 2.200 18 3.500 22.300 .5 25.500 4 25.500 10.400 25.500 20 20 26 16 30 12.600 30.100 9 30 5.500 26 0 20 0 10.400 0 4 1.900 .5z" fill="#3f464e"/><path d="M3.600 11.200Q7 7.200 10.600 11.200M15 11.200Q18.400 7.200 22 11.200" fill="none" stroke="#f8c400" stroke-width="1.900"/><path d="M6.800 19.400Q12.900 22.500 19 19.400 17.500 24.600 12.900 24.600 8.300 24.600 6.800 19.400z" fill="#f8c400"/></g><circle cx="2611.800" cy="1097.46" r="10.600" fill="#6a2b49"/><path d="M2292.04 1148.62l13.2 12.8l-13.2 12.8" fill="none" stroke="#cfcfd2" stroke-width="2.7"/><path transform="translate(2335.94 1146.32)" fill="#c06f56" fill-rule="evenodd" d="M0 5.8H17L20.1 0H37V30H0Z M22.1 2.9H33.2V5.8H22.1Z"/><g transform="translate(2347.84 1152.4199999999998)"><path d="M0 0h27.200l-2.500 26.700L13.600 30.800 2.500 26.700z" fill="#e44d26"/><path d="M13.600 2.200v26.300l9-3.400L24.800 2.200z" fill="#f16529"/><path d="M12 8.800L4.300 14.300 12 19.800M14.800 8.800L22.500 14.300 14.800 19.800" fill="none" stroke="#fff" stroke-width="3.200"/></g><path d="M2292.04 1211.9799999999998l13.2 12.8l-13.2 12.8" fill="none" stroke="#cfcfd2" stroke-width="2.7"/><path transform="translate(2335.94 1209.68)" fill="#c19553" fill-rule="evenodd" d="M0 5.8H17L20.1 0H37V30H0Z M22.1 2.9H33.2V5.8H22.1Z"/><path d="M2292.04 1275.34l13.2 12.8l-13.2 12.8" fill="none" stroke="#cfcfd2" stroke-width="2.7"/><path transform="translate(2335.94 1273.04)" fill="#5b9bd0" fill-rule="evenodd" d="M0 5.8H17L20.1 0H37V30H0Z M22.1 2.9H33.2V5.8H22.1Z"/><g transform="translate(2347.94 1279.54)"><path d="M0 0h27l-2.500 26.500L13.500 30.500 2.500 26.500z" fill="#1572b6"/><path d="M13.500 2v26.300l9-3.300L24.600 2z" fill="#2a8fe0"/><path d="M10.500 7.500c-2.500 0-3 1-3 3v2.500c0 1.500-.7 2.300-2 2.500 1.300.2 2 1 2 2.500v2.500c0 2 .5 3 3 3M16.500 7.500c2.500 0 3 1 3 3v2.500c0 1.500.7 2.300 2 2.500-1.300.2-2 1-2 2.500v2.500c0 2-.5 3-3 3" fill="none" stroke="#fff" stroke-width="2.200"/></g><circle cx="2611.800" cy="1287.54" r="10.600" fill="#2a5968"/><path d="M2292.04 1338.7l13.2 12.8l-13.2 12.8" fill="none" stroke="#cfcfd2" stroke-width="2.7"/><path transform="translate(2335.94 1336.4)" fill="#0aa144" fill-rule="evenodd" d="M0 5.8H17L20.1 0H37V30H0Z M22.1 2.9H33.2V5.8H22.1Z"/><text x="2345.44" y="1370.8000000000002" font-family="Liberation Sans, sans-serif" font-size="24" fill="#fff" stroke="#0aa144" stroke-width="3" paint-order="stroke" textLength="29.500" lengthAdjust="spacing">TS</text><path d="M2292.04 1402.06l13.2 12.8l-13.2 12.8" fill="none" stroke="#cfcfd2" stroke-width="2.7"/><path transform="translate(2335.94 1399.76)" fill="#5c3d00" fill-rule="evenodd" d="M0 5.8H17L20.1 0H37V30H0Z M22.1 2.9H33.2V5.8H22.1Z"/><g transform="translate(2335.94 1399.76)" fill="none" stroke="#d68d0c"><path d="M32.500 15L17 30" stroke-width="5"/><path d="M39.480 12.890A4.500 4.500 0 1 1 34.610 8.020" stroke-width="4.200"/><path d="M9.520 31.610A4.500 4.500 0 1 1 14.390 36.480" stroke-width="4.200"/><path d="M18 14.500L37.500 34.500" stroke-width="5"/><rect x="8.500" y="8" width="15.500" height="9" transform="rotate(-45 16.250 12.500)" fill="#d68d0c" stroke="none"/></g><circle cx="2611.800" cy="1414.26" r="10.600" fill="#3b6048"/><text x="2331.94" y="1491.12" font-family="Liberation Sans, sans-serif" font-weight="bold" font-size="35.500" fill="#0b82d4" textLength="37.5" lengthAdjust="spacingAndGlyphs">TS</text><g transform="translate(2310.4 1542.98)" stroke="#15161c" stroke-width=".7"><path d="M9.500 -12.900Q12 -18 16.800 -20.200 20 -21 20.700 -19.200 21 -15 19.700 -12.900L18.200 -10.500z" fill="#f7e9ea"/><path d="M27.900 -4.200Q29 -6.500 31.800 -7.100 35.500 -8 38.100 -6.100 40 -4.500 39.600 -2.200 38 1 34.700 3.100 32 5 28.500 5.200z" fill="#f7e9ea"/><path d="M11 -11Q17 -12 22.600 -9.500 26 -8 27 -4.200 28.500 1 27.500 4.600 24 9 19.600 12 12 16 4.200 17.200 1 17.800 .5 16.500 0 11 1.300 5.500 2.500 0 4.200 -4.200 7 -9 11 -11z" fill="#fdfdfd"/><g fill="none" stroke="#15161c" stroke-width="1"><circle cx="9" cy="1.200" r="2.700"/><ellipse cx="19.700" cy="3.800" rx="5.200" ry="2.900" transform="rotate(8 19.700 3.800)"/><path d="M11.700 1.800l3 1M3 -1l3.500 1.300M24.800 4.500l3 .3"/></g><circle cx="9.300" cy="1.300" r=".9" fill="#15161c" stroke="none"/><circle cx="18" cy="3.600" r=".9" fill="#15161c" stroke="none"/><ellipse cx="2.300" cy="15.200" rx="1.700" ry="1.200" fill="#e9e1e1" stroke-width=".6"/></g><g transform="translate(2329.9 1605.04)"><path d="M-4.29 -14.48L-3.78 -19.44L3.78 -19.44L4.29 -14.48L7.21 -13.27L11.07 -16.41L16.41 -11.07L13.27 -7.21L14.48 -4.29L19.44 -3.78L19.44 3.78L14.48 4.29L13.27 7.21L16.41 11.07L11.07 16.41L7.21 13.27L4.29 14.48L3.78 19.44L-3.78 19.44L-4.29 14.48L-7.21 13.27L-11.07 16.41L-16.41 11.07L-13.27 7.21L-14.48 4.29L-19.44 3.78L-19.44 -3.78L-14.48 -4.29L-13.27 -7.21L-16.41 -11.07L-11.07 -16.41L-7.21 -13.27ZM6.6 0A6.6 6.6 0 1 0 -6.6 0A6.6 6.6 0 1 0 6.6 0Z" fill="#9fbdcb" fill-rule="evenodd"/></g><g transform="translate(2329.9 1668.4)"><path d="M-4.29 -14.48L-3.78 -19.44L3.78 -19.44L4.29 -14.48L7.21 -13.27L11.07 -16.41L16.41 -11.07L13.27 -7.21L14.48 -4.29L19.44 -3.78L19.44 3.78L14.48 4.29L13.27 7.21L16.41 11.07L11.07 16.41L7.21 13.27L4.29 14.48L3.78 19.44L-3.78 19.44L-4.29 14.48L-7.21 13.27L-11.07 16.41L-16.41 11.07L-13.27 7.21L-14.48 4.29L-19.44 3.78L-19.44 -3.78L-14.48 -4.29L-13.27 -7.21L-16.41 -11.07L-11.07 -16.41L-7.21 -13.27ZM6.6 0A6.6 6.6 0 1 0 -6.6 0A6.6 6.6 0 1 0 6.6 0Z" fill="#9fbdcb" fill-rule="evenodd"/></g><g transform="translate(2330.1 1731.6599999999999)"><polygon points="18.20,0.00 9.10,15.76 -9.10,15.76 -18.20,0.00 -9.10,-15.76 9.10,-15.76" transform="scale(1 .96)" fill="#4b32c3" stroke="#4b32c3" stroke-width="3.500" stroke-linejoin="round"/><polygon points="11.60,7.00 0.00,13.70 -11.60,7.00 -11.60,-6.40 -0.00,-13.10 11.60,-6.40" fill="#0a0c14"/><polygon points="7.88,4.85 0.00,9.40 -7.88,4.85 -7.88,-4.25 -0.00,-8.80 7.88,-4.25" fill="#8080f2"/></g><g transform="translate(2308.4 1773.92) scale(1.13)"><rect x="5.600" y="5.600" width="26.500" height="26.500" rx="3" transform="rotate(45 18.850 18.850)" fill="#e44c30"/><path d="M13 6.500l6.500 6.500v13M19.500 14l6.500 6.500" stroke="#fff" stroke-width="2.400" fill="none"/><circle cx="19.500" cy="13" r="2.900" fill="#fff"/><circle cx="19.500" cy="26" r="2.900" fill="#fff"/><circle cx="26.500" cy="20.500" r="2.900" fill="#fff"/></g><path transform="translate(2310.1 1851.18) scale(2.233)" fill="#cb3837" fill-rule="evenodd" d="M0 0h18v6H9v1H5V6H0V0zm1 5h2V2h1v3h1V1H1v4zm5-4v5h2V5h2V1H6zm2 1h1v2H8V2zm3-1v4h2V2h1v3h1V2h1v3h1V1h-6z"/><g transform="translate(2311.9 1900.6399999999999) scale(1.06)" fill="none" stroke="#83cd29" stroke-width="2.800"><path d="M16.500 1.500L32 10.500v18L16.500 37.500 11.500 34.500M16.500 1.500L1.500 10.500v18l4.500 2.600c3 1.500 6 .5 6-3V11.500" stroke-linejoin="round"/><path d="M27 15c-1.500-2.500-9.500-2.800-9.500 1s9.500 2 9.500 6-8.500 3.800-10 .8" stroke-width="2.600"/></g><g transform="translate(2312.9 1967.7)"><rect x="0" y="0.0" width="8.6" height="2.100" rx="1" fill="#56b3b4"/><rect x="9.4" y="0.0" width="24.4" height="2.100" rx="1" fill="#4d616e"/><rect x="0" y="3.45" width="2.3" height="2.100" rx="1" fill="#ea5e5e"/><rect x="3.1" y="3.45" width="14.9" height="2.100" rx="1" fill="#fbbf47"/><rect x="18.9" y="3.45" width="11.8" height="2.100" rx="1" fill="#4d616e"/><rect x="0" y="6.9" width="5.5" height="2.100" rx="1" fill="#56b3b4"/><rect x="6.3" y="6.9" width="8.6" height="2.100" rx="1" fill="#bf85bf"/><rect x="15.8" y="6.9" width="5.5" height="2.100" rx="1" fill="#6a7f8c"/><rect x="22.1" y="6.9" width="8.6" height="2.100" rx="1" fill="#4d616e"/><rect x="0" y="10.35" width="5.5" height="2.100" rx="1" fill="#fbbf47"/><rect x="6.3" y="10.35" width="11.8" height="2.100" rx="1" fill="#56b3b4"/><rect x="18.9" y="10.35" width="11.8" height="2.100" rx="1" fill="#4d616e"/><rect x="0" y="13.8" width="2.3" height="2.100" rx="1" fill="#bf85bf"/><rect x="3.1" y="13.8" width="5.5" height="2.100" rx="1" fill="#fbbf47"/><rect x="9.4" y="13.8" width="8.6" height="2.100" rx="1" fill="#56b3b4"/><rect x="18.9" y="13.8" width="11.8" height="2.100" rx="1" fill="#6a7f8c"/><rect x="0" y="17.25" width="5.5" height="2.100" rx="1" fill="#56b3b4"/><rect x="6.3" y="17.25" width="5.5" height="2.100" rx="1" fill="#4d616e"/><rect x="12.6" y="17.25" width="8.6" height="2.100" rx="1" fill="#fbbf47"/><rect x="22.0" y="17.25" width="8.6" height="2.100" rx="1" fill="#4d616e"/><rect x="0" y="20.7" width="8.6" height="2.100" rx="1" fill="#bf85bf"/><rect x="9.4" y="20.7" width="5.5" height="2.100" rx="1" fill="#56b3b4"/><rect x="15.8" y="20.7" width="14.9" height="2.100" rx="1" fill="#4d616e"/><rect x="0" y="24.15" width="11.8" height="2.100" rx="1" fill="#fbbf47"/><rect x="12.6" y="24.15" width="14.9" height="2.100" rx="1" fill="#4d616e"/><rect x="0" y="27.6" width="2.3" height="2.100" rx="1" fill="#bf85bf"/><rect x="3.1" y="27.6" width="5.5" height="2.100" rx="1" fill="#ea5e5e"/><rect x="9.4" y="27.6" width="18.1" height="2.100" rx="1" fill="#4d616e"/><rect x="0" y="31.05" width="8.6" height="2.100" rx="1" fill="#56b3b4"/><rect x="9.4" y="31.05" width="18.1" height="2.100" rx="1" fill="#4d616e"/><rect x="0" y="34.5" width="8.6" height="2.100" rx="1" fill="#ea5e5e"/><rect x="9.4" y="34.5" width="21.2" height="2.100" rx="1" fill="#4d616e"/></g></g></svg>
</div></body></html>
